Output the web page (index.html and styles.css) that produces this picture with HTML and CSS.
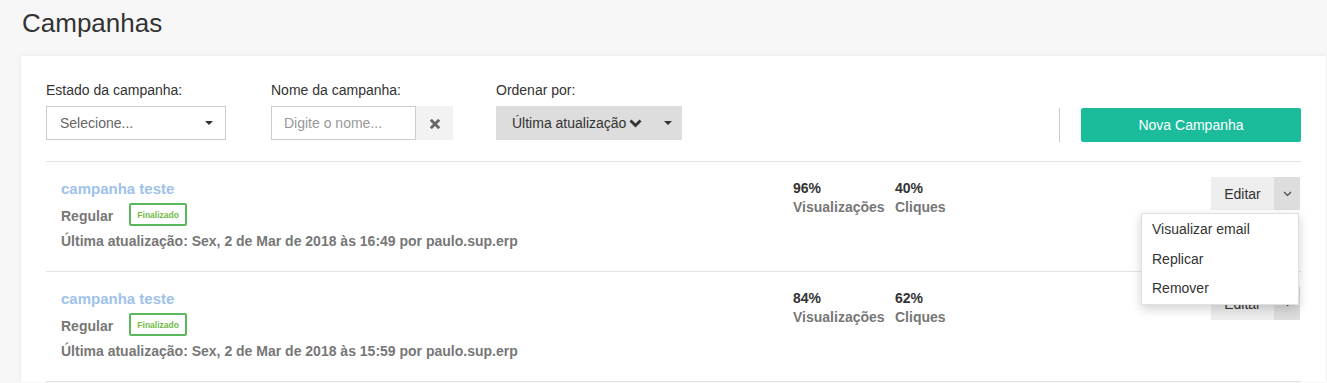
FILE: index.html
```html
<!DOCTYPE html>
<html lang="pt-BR">

<head>
  <meta charset="UTF-8">
  <meta name="viewport" content="width=device-width, initial-scale=1.0">
  <title>Campanhas</title>
  <link rel="stylesheet" href="styles.css">
</head>

<body>
  <h1 class="page-title">Campanhas</h1>
  <main class="card">
    <div class="filters">
      <div class="filter filter-state">
        <label class="filter-label">Estado da campanha:</label>
        <div class="select">
          <span>Selecione...</span>
          <span class="caret"></span>
        </div>
      </div>
      <div class="filter filter-name">
        <label class="filter-label">Nome da campanha:</label>
        <div class="input-group">
          <input type="text" class="text-input" placeholder="Digite o nome...">
          <button class="clear-btn">
            <svg width="10" height="10" viewBox="0 0 10 10">
              <path d="M1.8 1.8 L8.2 8.2 M8.2 1.8 L1.8 8.2" stroke="#666" stroke-width="2.8" stroke-linecap="square" />
            </svg>
          </button>
        </div>
      </div>
      <div class="filter filter-order">
        <label class="filter-label">Ordenar por:</label>
        <div class="order-select">
          <span>Última atualização</span>
          <svg class="chevron" width="13" height="9" viewBox="0 0 13 9">
            <path d="M1.5 1.5 L6.5 6.5 L11.5 1.5" stroke="#333" stroke-width="2.8" fill="none" />
          </svg>
          <span class="caret"></span>
        </div>
      </div>
      <div class="filter-actions">
        <span class="divider"></span>
        <button class="btn-new">Nova Campanha</button>
      </div>
    </div>

    <ul class="campaigns">
      <li class="campaign">
        <div class="campaign-info">
          <a href="#" class="campaign-name">campanha teste</a>
          <div class="campaign-meta">
            <span class="campaign-type">Regular</span>
            <span class="badge">Finalizado</span>
          </div>
          <div class="campaign-update">Última atualização: Sex, 2 de Mar de 2018 às 16:49 por paulo.sup.erp</div>
        </div>
        <div class="stat">
          <div class="stat-value">96%</div>
          <div class="stat-label">Visualizações</div>
        </div>
        <div class="stat">
          <div class="stat-value">40%</div>
          <div class="stat-label">Cliques</div>
        </div>
        <div class="actions">
          <button class="btn-edit">Editar</button>
          <button class="btn-toggle">
            <svg width="9" height="6" viewBox="0 0 9 6">
              <path d="M1 1 L4.5 4.5 L8 1" stroke="#444" stroke-width="1.2" fill="none" />
            </svg>
          </button>
          <ul class="menu">
            <li>Visualizar email</li>
            <li>Replicar</li>
            <li>Remover</li>
          </ul>
        </div>
      </li>
      <li class="campaign">
        <div class="campaign-info">
          <a href="#" class="campaign-name">campanha teste</a>
          <div class="campaign-meta">
            <span class="campaign-type">Regular</span>
            <span class="badge">Finalizado</span>
          </div>
          <div class="campaign-update">Última atualização: Sex, 2 de Mar de 2018 às 15:59 por paulo.sup.erp</div>
        </div>
        <div class="stat">
          <div class="stat-value">84%</div>
          <div class="stat-label">Visualizações</div>
        </div>
        <div class="stat">
          <div class="stat-value">62%</div>
          <div class="stat-label">Cliques</div>
        </div>
        <div class="actions">
          <button class="btn-edit">Editar</button>
          <button class="btn-toggle">
            <svg width="9" height="6" viewBox="0 0 9 6">
              <path d="M1 1 L4.5 4.5 L8 1" stroke="#444" stroke-width="1.2" fill="none" />
            </svg>
          </button>
        </div>
      </li>
    </ul>
  </main>
</body>

</html>
```

FILE: styles.css
```css
* {
  margin: 0;
  padding: 0;
  box-sizing: border-box;
  font-family: "Liberation Sans", Arial, sans-serif;
}

body {
  background-color: #f7f7f7;
  color: #333;
}

.page-title {
  font-size: 26px;
  font-weight: 400;
  line-height: 30px;
  margin: 8px 0 0 22px;
  color: #333;
}

.card {
  margin: 18px 1px 0 21px;
  padding: 24px 25px 0 25px;
  background-color: #fff;
  box-shadow: 0 0 4px rgba(0, 0, 0, 0.08);
}

/* filters */
.filters {
  display: flex;
  align-items: flex-end;
  padding-bottom: 21px;
  border-bottom: 1px solid #e3e3e3;
}

.filter {
  display: flex;
  flex-direction: column;
}

.filter-label {
  font-size: 14px;
  line-height: 20px;
  margin-bottom: 6px;
}

.filter-state {
  width: 180px;
  margin-right: 45px;
}

.filter-name {
  width: 182px;
  margin-right: 43px;
}

.select {
  display: flex;
  align-items: center;
  justify-content: space-between;
  height: 34px;
  padding: 0 12px 0 13px;
  border: 1px solid #ccc;
  font-size: 14px;
  color: #666;
}

.caret {
  width: 0;
  height: 0;
  border-left: 4px solid transparent;
  border-right: 4px solid transparent;
  border-top: 4px solid #333;
}

.input-group {
  display: flex;
  height: 34px;
}

.text-input {
  width: 145px;
  height: 34px;
  padding: 0 12px;
  border: 1px solid #ccc;
  font-size: 14px;
  outline: none;
}

.text-input::placeholder {
  color: #999;
}

.clear-btn {
  width: 37px;
  height: 34px;
  border: none;
  background-color: #f2f2f2;
  display: flex;
  align-items: center;
  justify-content: center;
  padding-top: 2px;
}

.order-select {
  display: flex;
  align-items: center;
  width: 186px;
  height: 34px;
  padding: 0 10px 0 16px;
  background-color: #ddd;
  font-size: 14px;
  color: #333;
}

.chevron {
  margin-left: 3px;
  margin-top: 1px;
}

.order-select .caret {
  margin-left: auto;
}

.filter-actions {
  display: flex;
  align-items: center;
  margin-left: auto;
  margin-bottom: -2px;
}

.divider {
  width: 1px;
  height: 34px;
  background-color: #ccc;
  margin-right: 21px;
}

.btn-new {
  width: 220px;
  height: 34px;
  border: none;
  border-radius: 2px;
  background-color: #1abc9c;
  color: #fff;
  font-size: 14px;
}

/* campaign list */
.campaigns {
  list-style-type: none;
}

.campaign {
  display: grid;
  grid-template-columns: 732px 102px 1fr auto;
  padding: 15px 1px 20px 15px;
  border-bottom: 1px solid #e3e3e3;
}

.campaign-info,
.stat {
  padding-top: 2px;
}

.campaign-name {
  display: block;
  font-size: 15px;
  font-weight: 700;
  line-height: 20px;
  color: #9ec2ea;
  text-decoration: none;
}

.campaign-meta {
  display: flex;
  align-items: center;
  margin-top: 4px;
  height: 23px;
}

.campaign-type {
  font-size: 14px;
  font-weight: 700;
  color: #777;
  margin-top: 2px;
}

.badge {
  margin-left: 16px;
  width: 58px;
  height: 23px;
  display: flex;
  align-items: center;
  justify-content: center;
  border: 2px solid #5cb85c;
  border-radius: 2px;
  font-size: 8.5px;
  font-weight: 700;
  color: #6fbb45;
}

.campaign-update {
  margin-top: 5px;
  font-size: 14px;
  font-weight: 700;
  line-height: 20px;
  color: #777;
}

.stat-value {
  font-size: 14px;
  font-weight: 700;
  line-height: 18px;
  color: #333;
}

.stat-label {
  font-size: 14px;
  font-weight: 700;
  line-height: 20px;
  color: #777;
}

.actions {
  position: relative;
  display: flex;
  align-self: flex-start;
  height: 33px;
}

.btn-edit {
  width: 63px;
  border: none;
  background-color: #eee;
  font-size: 14px;
  color: #333;
}

.btn-toggle {
  width: 26px;
  border: none;
  background-color: #ddd;
  display: flex;
  align-items: center;
  justify-content: center;
}

.menu {
  position: absolute;
  top: 36px;
  right: 1px;
  width: 158px;
  padding-top: 1px;
  list-style-type: none;
  background-color: #fff;
  border: 1px solid rgba(0, 0, 0, 0.12);
  box-shadow: 0 4px 10px rgba(0, 0, 0, 0.18);
  z-index: 10;
}

.menu li {
  font-size: 14px;
  line-height: 29.5px;
  padding-left: 10px;
  color: #333;
  cursor: pointer;
}
```
